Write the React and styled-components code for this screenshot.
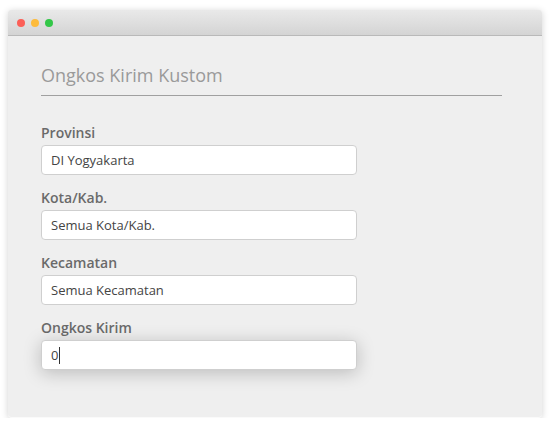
import React from "react";
import styled, { createGlobalStyle } from "styled-components";

const GlobalStyle = createGlobalStyle`
  body {
    margin: 0;
    background: #ffffff;
    font-family: "Open Sans", "Noto Sans", sans-serif;
  }
`;

const Window = styled.div`
  margin: 10px 8px 0 8px;
  width: 534px;
  background: #efefef;
  border-radius: 4px;
  box-shadow: 0 1px 7px rgba(0, 0, 0, 0.18);
  overflow: hidden;
  border-bottom: 1px solid #fafafa;
`;

const TitleBar = styled.div`
  height: 25px;
  display: flex;
  align-items: center;
  gap: 6px;
  padding-left: 9px;
  background: linear-gradient(#e9e9e9, #d4d4d4);
  border-bottom: 1px solid #b9b9b9;
`;

const Dot = styled.span`
  width: 8px;
  height: 8px;
  border-radius: 50%;
  background: ${(p) => p.color};
`;

const Content = styled.div`
  padding: 27px 40px 47px 33px;
`;

const Heading = styled.h2`
  margin: 0 0 27px 0;
  padding-bottom: 8px;
  font-size: 18px;
  line-height: 24px;
  font-weight: 400;
  color: #9a9a9a;
  border-bottom: 1px solid #a0a0a0;
`;

const Group = styled.div`
  display: flex;
  flex-direction: column;
  gap: 2px;
  margin-bottom: 13px;

  &:last-child {
    margin-bottom: 0;
  }
`;

const Label = styled.label`
  font-size: 14px;
  line-height: 20px;
  font-weight: 600;
  color: #6a6a6a;
`;

const Field = styled.div`
  width: 316px;
  height: 30px;
  box-sizing: border-box;
  display: flex;
  align-items: center;
  padding: 0 9px;
  background: #fff;
  border: 1px solid #cfcfcf;
  border-radius: 4px;
  font-size: 13px;
  color: #444;
  box-shadow: ${(p) =>
    p.focused ? "0 3px 18px rgba(0, 0, 0, 0.22)" : "none"};
`;

const Caret = styled.span`
  display: inline-block;
  width: 1px;
  height: 17px;
  margin-left: 1px;
  background: #333;
`;

const fields = [
  { label: "Provinsi", value: "DI Yogyakarta" },
  { label: "Kota/Kab.", value: "Semua Kota/Kab." },
  { label: "Kecamatan", value: "Semua Kecamatan" },
  { label: "Ongkos Kirim", value: "0", focused: true },
];

export default function App() {
  return (
    <>
      <GlobalStyle />
      <Window>
        <TitleBar>
          <Dot color="#fc5f57" />
          <Dot color="#fdbb3b" />
          <Dot color="#33c748" />
        </TitleBar>
        <Content>
          <Heading>Ongkos Kirim Kustom</Heading>
          {fields.map((f) => (
            <Group key={f.label}>
              <Label>{f.label}</Label>
              <Field focused={f.focused}>
                {f.value}
                {f.focused && <Caret />}
              </Field>
            </Group>
          ))}
        </Content>
      </Window>
    </>
  );
}
